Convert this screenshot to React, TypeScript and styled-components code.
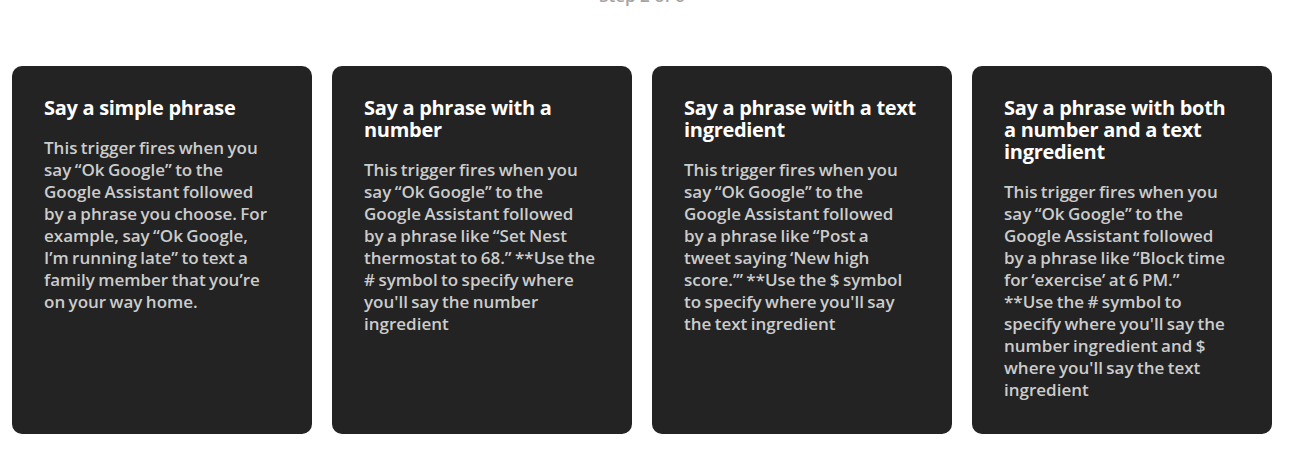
import React from "react";
import styled, { createGlobalStyle } from "styled-components";

const GlobalStyle = createGlobalStyle`
  html, body {
    margin: 0;
    padding: 0;
    background: #ffffff;
    font-family: "Open Sans", "Liberation Sans", sans-serif;
    overflow: hidden;
  }
`;

const triggers = [
  {
    title: "Say a simple phrase",
    body: "This trigger fires when you say “Ok Google” to the Google Assistant followed by a phrase you choose. For example, say “Ok Google, I’m running late” to text a family member that you’re on your way home.",
  },
  {
    title: "Say a phrase with a number",
    body: "This trigger fires when you say “Ok Google” to the Google Assistant followed by a phrase like “Set Nest thermostat to 68.” **Use the # symbol to specify where you'll say the number ingredient",
  },
  {
    title: "Say a phrase with a text ingredient",
    body: "This trigger fires when you say “Ok Google” to the Google Assistant followed by a phrase like “Post a tweet saying ‘New high score.’” **Use the $ symbol to specify where you'll say the text ingredient",
  },
  {
    title: "Say a phrase with both a number and a text ingredient",
    body: "This trigger fires when you say “Ok Google” to the Google Assistant followed by a phrase like “Block time for ‘exercise’ at 6 PM.”\n**Use the # symbol to specify where you'll say the number ingredient and $ where you'll say the text ingredient",
  },
];

const App: React.FC = () => {
  return (
    <Page>
      <GlobalStyle />
      <StepLabel>Step 2 of 6</StepLabel>
      <CardGrid>
        {triggers.map((t, index) => (
          <Card key={index}>
            <CardTitle>{t.title}</CardTitle>
            <CardBody>{t.body}</CardBody>
          </Card>
        ))}
      </CardGrid>
    </Page>
  );
};

export default App;

const Page = styled.div`
  width: 1294px;
  height: 466px;
  display: flex;
  flex-direction: column;
`;

const StepLabel = styled.div`
  margin-top: -15px;
  width: 1284px;
  text-align: center;
  color: #a3a3a3;
  font-size: 17px;
  font-weight: 600;
  line-height: 22px;
  height: 22px;
`;

const CardGrid = styled.div`
  display: grid;
  grid-template-columns: repeat(4, 300px);
  gap: 20px;
  margin-top: 59px;
  margin-left: 12px;
`;

const Card = styled.div`
  background: #232323;
  border-radius: 10px;
  height: 368px;
  box-sizing: border-box;
  padding: 31px 34px 31px 32px;
  display: flex;
  flex-direction: column;
  gap: 18px;
`;

const CardTitle = styled.h3`
  margin: 0;
  color: #ffffff;
  font-size: 20px;
  font-weight: 700;
  line-height: 22px;
  letter-spacing: -0.3px;
`;

const CardBody = styled.p`
  margin: 0 2px 0 0;
  color: #cccccc;
  font-size: 17px;
  font-weight: 600;
  line-height: 22px;
  word-spacing: -1px;
  white-space: pre-line;
`;
